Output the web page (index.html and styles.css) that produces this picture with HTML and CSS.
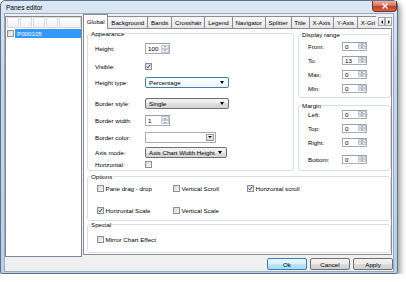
FILE: index.html
```html
<!DOCTYPE html>
<html lang="en">
<head>
    <meta charset="UTF-8">
    <title>Panes editor</title>
    <link rel="stylesheet" href="styles.css">
</head>
<body>

<div class="window">
    <div class="titlebar">
        <span class="title">Panes editor</span>
        <span class="close">
            <svg width="8" height="6" viewBox="0 0 8 6"><path d="M1.5 0.5 L6.5 5.5 M6.5 0.5 L1.5 5.5" stroke="#fff" stroke-width="1.4"/></svg>
        </span>
    </div>

    <div class="client">
        <div class="main">
            <!-- pane list -->
            <div class="tree">
                <div class="tree-head">
                    <span></span><span></span><span></span><span></span><span class="wide"></span>
                </div>
                <div class="tree-item">
                    <span class="check"></span>
                    <span class="item-text">P000105</span>
                </div>
            </div>

            <div class="tabs">
                <div class="tab-strip">
                    <div class="tab-list">
                        <span class="tab active">Global</span>
                        <span class="tab">Background</span>
                        <span class="tab">Bands</span>
                        <span class="tab">Crosshair</span>
                        <span class="tab">Legend</span>
                        <span class="tab">Navigator</span>
                        <span class="tab">Splitter</span>
                        <span class="tab">Title</span>
                        <span class="tab">X-Axis</span>
                        <span class="tab">Y-Axis</span>
                        <span class="tab">X-Gri</span>
                    </div>
                    <div class="tab-scroll">
                        <span class="scroll-btn left"></span>
                        <span class="scroll-btn right"></span>
                    </div>
                </div>

                <div class="page">
                    <div class="top-row">
                        <fieldset class="group appearance">
                            <legend>Appearance</legend>
                            <div class="form appearance-form">
                                <label>Height:</label>
                                <div class="cell"><div class="spin"><span class="val">100</span><span class="btns"><span class="up"></span><span class="down"></span></span></div></div>

                                <label>Visible:</label>
                                <div class="cell"><span class="check"><svg width="5" height="5" viewBox="0 0 5 5"><path d="M0.6 2.6 L1.9 3.9 L4.4 0.6" fill="none" stroke="#23408e" stroke-width="1"/></svg></span></div>

                                <label>Height type:</label>
                                <div class="cell"><div class="combo focus">Percentage</div></div>

                                <label>Border style:</label>
                                <div class="cell"><div class="combo">Single</div></div>

                                <label>Border width:</label>
                                <div class="cell"><div class="spin"><span class="val">1</span><span class="btns"><span class="up"></span><span class="down"></span></span></div></div>

                                <label>Border color:</label>
                                <div class="cell"><div class="color-box"><span class="drop"></span></div></div>

                                <label>Axis mode:</label>
                                <div class="cell"><div class="combo narrow">Axis Chart Width Height</div></div>

                                <label>Horizontal:</label>
                                <div class="cell"><span class="check"></span></div>
                            </div>
                        </fieldset>

                        <div class="side">
                            <fieldset class="group range">
                                <legend>Display range</legend>
                                <div class="form range-form">
                                    <label>From:</label>
                                    <div class="cell"><div class="spin small"><span class="val">0</span><span class="btns"><span class="up"></span><span class="down"></span></span></div></div>
                                    <label>To:</label>
                                    <div class="cell"><div class="spin small"><span class="val">13</span><span class="btns"><span class="up"></span><span class="down"></span></span></div></div>
                                    <label>Max:</label>
                                    <div class="cell"><div class="spin small"><span class="val">0</span><span class="btns"><span class="up"></span><span class="down"></span></span></div></div>
                                    <label>Min:</label>
                                    <div class="cell"><div class="spin small"><span class="val">0</span><span class="btns"><span class="up"></span><span class="down"></span></span></div></div>
                                </div>
                            </fieldset>

                            <fieldset class="group margin">
                                <legend>Margin</legend>
                                <div class="form margin-form">
                                    <label>Left:</label>
                                    <div class="cell"><div class="spin small"><span class="val">0</span><span class="btns"><span class="up"></span><span class="down"></span></span></div></div>
                                    <label>Top:</label>
                                    <div class="cell"><div class="spin small"><span class="val">0</span><span class="btns"><span class="up"></span><span class="down"></span></span></div></div>
                                    <label>Right:</label>
                                    <div class="cell"><div class="spin small"><span class="val">0</span><span class="btns"><span class="up"></span><span class="down"></span></span></div></div>
                                    <label>Bottom:</label>
                                    <div class="cell"><div class="spin small"><span class="val">0</span><span class="btns"><span class="up"></span><span class="down"></span></span></div></div>
                                </div>
                            </fieldset>
                        </div>
                    </div>

                    <fieldset class="group options">
                        <legend>Options</legend>
                        <div class="form options-form">
                            <div class="opt"><span class="check"></span>Pane drag - drop</div>
                            <div class="opt"><span class="check"></span>Vertical Scroll</div>
                            <div class="opt"><span class="check"><svg width="5" height="5" viewBox="0 0 5 5"><path d="M0.6 2.6 L1.9 3.9 L4.4 0.6" fill="none" stroke="#23408e" stroke-width="1"/></svg></span>Horizontal scroll</div>
                            <div class="opt"><span class="check"><svg width="5" height="5" viewBox="0 0 5 5"><path d="M0.6 2.6 L1.9 3.9 L4.4 0.6" fill="none" stroke="#23408e" stroke-width="1"/></svg></span>Horizontal Scale</div>
                            <div class="opt"><span class="check"></span>Vertical Scale</div>
                        </div>
                    </fieldset>

                    <fieldset class="group special">
                        <legend>Special</legend>
                        <div class="form special-form">
                            <div class="opt"><span class="check"></span>Mirror Chart Effect</div>
                        </div>
                    </fieldset>
                </div>
            </div>
        </div>

        <div class="footer">
            <button class="btn default">Ok</button>
            <button class="btn">Cancel</button>
            <button class="btn">Apply</button>
        </div>
    </div>
</div>

</body>
</html>
```

FILE: styles.css
```css
* {
    box-sizing: border-box;
}
body {
    margin: 0;
    background-color: #fff;
    font-family: "Liberation Sans", Arial, sans-serif;
    font-size: 6.2px;
    color: #000;
}
/* Window frame */
.window {
    width: 398px;
    height: 274px;
    border: 1px solid #5d718d;
    border-radius: 5px 5px 2px 2px;
    background: linear-gradient(to bottom, #dce8f5 0%, #c6d8ee 25%, #bbd0e9 100%);
    box-shadow: 2px 3px 6px rgba(0, 0, 0, 0.45);
    padding: 0 4px 2px 4px;
    display: flex;
    flex-direction: column;
}
.titlebar {
    height: 13px;
    display: flex;
    align-items: flex-start;
}
.title {
    padding: 3px 0 0 1px;
    line-height: 7px;
    font-size: 6.5px;
}
.close {
    margin-left: auto;
    margin-right: -4px;
    width: 25px;
    height: 11px;
    border: 1px solid #74322a;
    border-top: none;
    border-radius: 0 0 4px 4px;
    background: linear-gradient(to bottom, #eeb1a0 0%, #d86a52 50%, #c2402a 55%, #d0654c 100%);
    display: flex;
    align-items: center;
    justify-content: center;
}
.close svg {
    display: block;
}
.client {
    flex: 1;
    background-color: #f0f0f0;
    outline: 1px solid #97abc5;
    display: flex;
    flex-direction: column;
}
.main {
    flex: 1;
    display: flex;
    min-height: 0;
}
/* Pane list */
.tree {
    width: 77px;
    margin-top: 2px;
    border: 1px solid #828790;
    background-color: #fff;
}
.tree-head {
    display: flex;
    gap: 1px;
    height: 11px;
    padding-left: 1px;
}
.tree-head span {
    width: 12px;
    border: 1px solid #d8d8d8;
    background: linear-gradient(#ffffff, #f1f1f1);
}
.tree-head span.wide {
    flex: 1;
}
.tree-item {
    display: flex;
    align-items: center;
    gap: 1px;
    height: 9px;
    margin-top: 1px;
    padding-left: 1px;
}
.item-text {
    flex: 1;
    height: 9px;
    line-height: 9px;
    padding-left: 2px;
    background-color: #3399ff;
    color: #fff;
}
/* Tabs */
.tabs {
    flex: 1;
    margin: 0 1px 2px 1px;
    display: flex;
    flex-direction: column;
    min-width: 0;
}
.tab-strip {
    height: 14px;
    display: flex;
    align-items: flex-start;
}
.tab-list {
    flex: 1;
    height: 15px;
    display: flex;
    align-items: flex-end;
    overflow: hidden;
    position: relative;
    z-index: 1;
}
.tab {
    flex-shrink: 0;
    height: 12px;
    margin-bottom: 1px;
    margin-left: -1px;
    padding: 0 2.8px;
    border: 1px solid #898c95;
    border-bottom: none;
    background: linear-gradient(#f8f8f8, #e5e5e5);
    line-height: 11px;
    white-space: nowrap;
}
.tab.active {
    height: 15px;
    margin-bottom: 0;
    margin-left: 0;
    background: #fff;
    line-height: 13px;
    position: relative;
    z-index: 1;
}
.tab-scroll {
    display: flex;
    margin: 3px 0 0 2px;
}
.scroll-btn {
    width: 7px;
    height: 9px;
    border: 1px solid #a7abb0;
    background: linear-gradient(#fafafa, #e4e4e4);
    display: flex;
    align-items: center;
    justify-content: center;
}
.scroll-btn::after {
    content: "";
    border-top: 2px solid transparent;
    border-bottom: 2px solid transparent;
}
.scroll-btn.left::after {
    border-right: 2px solid #222;
}
.scroll-btn.right::after {
    border-left: 2px solid #222;
}
.page {
    flex: 1;
    background-color: #fff;
    border: 1px solid #898c95;
    padding: 1px 0 0 3px;
    display: flex;
    flex-direction: column;
}
/* Group boxes */
.group {
    margin: 0;
    padding: 0;
    min-width: 0;
    border: 1px solid #d5dfe5;
    border-radius: 3px;
}
.group legend {
    margin-left: 2px;
    padding: 0 1px;
    line-height: 7px;
}
.top-row {
    display: flex;
    gap: 4px;
    height: 141px;
}
.appearance {
    width: 207px;
    height: 141px;
}
.side {
    flex: 1;
    display: flex;
    flex-direction: column;
    gap: 3.5px;
    padding-top: 1px;
}
.range {
    height: 67px;
}
.margin {
    height: 69px;
}
.options {
    margin-top: 1.5px;
    height: 48.5px;
}
.special {
    margin-top: -0.5px;
    height: 32px;
}
.form {
    display: grid;
    align-items: end;
}
.form label {
    height: 11px;
    line-height: 11px;
}
.cell {
    height: 11px;
    display: flex;
    align-items: center;
}
.appearance-form {
    grid-template-columns: 50px auto;
    grid-template-rows: 11px 18px 16px 20.5px 17px 17px 15px 12px;
    padding: 6px 0 0 7px;
}
.range-form,
.margin-form {
    grid-template-columns: 34px 25px;
    padding-left: 9px;
}
.range-form {
    grid-template-rows: 9px 14px 14px 14px;
    padding-top: 3.5px;
}
.margin-form {
    grid-template-rows: 9px 14px 14px 17px;
    padding-top: 1px;
}
.range-form label,
.margin-form label,
.range-form .cell,
.margin-form .cell {
    height: 9px;
    line-height: 9px;
}
.options-form {
    grid-template-columns: 76px 74px auto;
    grid-template-rows: 11px 22px;
    padding: 3.5px 0 0 9px;
}
.special-form {
    grid-template-columns: auto;
    padding: 6.5px 0 0 9px;
}
.opt {
    height: 11px;
    display: flex;
    align-items: center;
    gap: 1.5px;
    white-space: nowrap;
}
/* Controls */
.check {
    width: 7px;
    height: 7px;
    flex-shrink: 0;
    border: 1px solid #8e8f8f;
    background: linear-gradient(135deg, #d6d6d6, #f8f8f8);
    display: flex;
    align-items: center;
    justify-content: center;
}
.check svg {
    display: block;
}
.spin {
    width: 25px;
    height: 11px;
    display: flex;
    border: 1px solid #abadb3;
    border-top-color: #9ba0a8;
    background-color: #fff;
}
.spin.small {
    height: 9px;
}
.spin .val {
    flex: 1;
    padding-left: 2px;
    line-height: 9px;
}
.spin.small .val {
    line-height: 7px;
}
.spin .btns {
    width: 9px;
    display: flex;
    flex-direction: column;
    padding: 0.5px;
}
.spin .btns span {
    flex: 1;
    border: 1px solid #c3cad3;
    background: linear-gradient(#f4f7fa, #dfe5ec);
    display: flex;
    align-items: center;
    justify-content: center;
}
.spin .btns span::after {
    content: "";
    border-left: 1.5px solid transparent;
    border-right: 1.5px solid transparent;
}
.spin .btns .up::after {
    border-bottom: 1.5px solid #4d6185;
}
.spin .btns .down::after {
    border-top: 1.5px solid #4d6185;
}
.combo {
    width: 84px;
    height: 11px;
    border: 1px solid #707070;
    border-radius: 2px;
    background: linear-gradient(#f3f3f3 0%, #ebebeb 50%, #dddddd 50%, #d4d4d4 100%);
    display: flex;
    align-items: center;
    justify-content: space-between;
    padding: 0 4px 0 3px;
    white-space: nowrap;
}
.combo::after {
    content: "";
    border-left: 2.5px solid transparent;
    border-right: 2.5px solid transparent;
    border-top: 3px solid #000;
}
.combo.focus {
    border-color: #3c7fb1;
    background: linear-gradient(#ffffff, #eef7fd);
}
.combo.narrow {
    width: 82px;
}
.color-box {
    width: 71px;
    height: 11px;
    border: 1px solid #abadb3;
    background-color: #fff;
    display: flex;
    justify-content: flex-end;
    padding: 1px;
}
.drop {
    width: 8px;
    border: 1px solid #9b9b9b;
    background: linear-gradient(#f4f4f4, #dadada);
    display: flex;
    align-items: center;
    justify-content: center;
}
.drop::after {
    content: "";
    border-left: 2px solid transparent;
    border-right: 2px solid transparent;
    border-top: 2.5px solid #000;
}
/* Dialog buttons */
.footer {
    height: 14px;
    display: flex;
    justify-content: flex-end;
    gap: 3px;
    padding-top: 1px;
}
.btn {
    width: 40px;
    height: 12px;
    padding: 0;
    border: 1px solid #707070;
    border-radius: 2px;
    background: linear-gradient(#f3f3f3 0%, #ebebeb 50%, #dddddd 50%, #cfcfcf 100%);
    font-family: inherit;
    font-size: 6.2px;
    color: #000;
}
.btn.default {
    border-color: #3c7fb1;
    background: linear-gradient(#eaf6fd 0%, #d9f0fc 50%, #bee6fd 50%, #a7d9f5 100%);
}
```
